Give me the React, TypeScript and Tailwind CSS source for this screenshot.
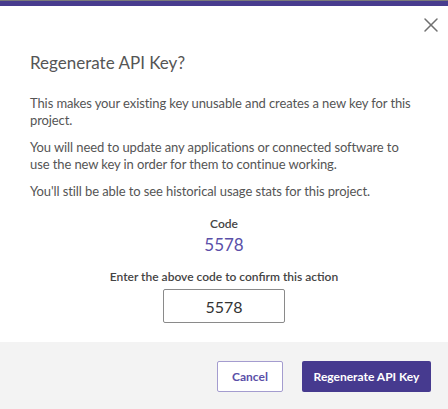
import { X } from "lucide-react";

export default function App() {
  return (
    <div
      className="flex h-[409px] w-[448px] flex-col bg-white text-[#555]"
      style={{ fontFamily: "Lato, 'Liberation Sans', sans-serif" }}
    >
      <div className="h-[1px] bg-[#7a7a7a]" />
      <div className="h-[5px] bg-[#483c8e]" />

      <div className="flex flex-1 flex-col px-[30px]">
        <div className="-mr-[25px] flex justify-end pt-[7px]">
          <X className="h-[24px] w-[24px] text-[#707070]" strokeWidth={1.5} />
        </div>

        <h2 className="mt-[14px] text-[17px] leading-[24px] text-[#555]">Regenerate API Key?</h2>

        <div className="mt-[20px] space-y-[10px] text-[13px] leading-[17px] tracking-[-0.1px] text-[#555]">
          <p>This makes your existing key unusable and creates a new key for this project.</p>
          <p>
            You will need to update any applications or connected software to use the new key in
            order for them to continue working.
          </p>
          <p>You'll still be able to see historical usage stats for this project.</p>
        </div>

        <div className="mt-[16px] flex flex-col items-center">
          <span className="text-[12px] font-semibold leading-[16px] text-[#444]">Code</span>
          <span className="mt-[2px] text-[17px] leading-[22px] text-[#5a4fa8]">5578</span>
          <span className="mt-[13px] text-[12px] font-semibold leading-[16px] text-[#444]">
            Enter the above code to confirm this action
          </span>
          <input
            className="mt-[4px] h-[34px] w-[122px] rounded-[2px] border border-[#8a8a8a] text-center text-[16px] text-[#333] outline-none"
            defaultValue="5578"
          />
        </div>
      </div>

      <div className="flex h-[67px] items-start justify-end gap-[19px] bg-[#f3f3f3] pr-[17px] pt-[19px]">
        <button className="h-[31px] w-[66px] rounded-[2px] border border-[#a49ccf] bg-white text-[12px] font-bold text-[#5a4fa8]">
          Cancel
        </button>
        <button className="h-[31px] w-[129px] rounded-[2px] bg-[#463a8f] text-[12px] font-bold text-white">
          Regenerate API Key
        </button>
      </div>
    </div>
  );
}
